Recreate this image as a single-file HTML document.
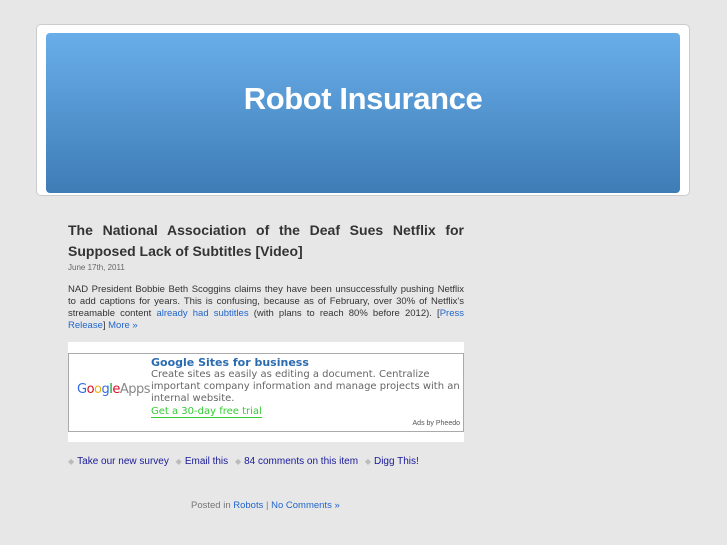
<!DOCTYPE html><html><head><style>
body{margin:0;background:#e7e7e7;font-family:"Liberation Sans",sans-serif;width:727px;height:545px;overflow:hidden;position:relative}
.card{position:absolute;left:36px;top:24px;width:654px;height:172px;background:#fff;border:1px solid #ccc;border-radius:5px;box-sizing:border-box}
.hd{position:absolute;left:46px;top:33px;width:634px;height:160px;border-radius:4px;background:linear-gradient(#69aee9,#3e7cb6)}
.hd h1{margin:0;position:absolute;top:48px;width:100%;text-align:center;color:#fff;font-size:31px;font-weight:bold;letter-spacing:-0.4px}
.t{position:absolute;left:68px;top:220px;width:396px;font-size:14px;font-weight:bold;color:#333;line-height:21px;text-align:justify;text-align-last:justify}
.t2{text-align-last:left}
.d{position:absolute;left:68px;top:263px;font-size:8px;color:#666}
.b{position:absolute;left:68px;top:284px;width:396px;font-size:9.5px;color:#333;line-height:12px;text-align:justify}
a{color:#2266cc;text-decoration:none}
.ad{position:absolute;left:68px;top:342px;width:396px;height:100px;background:#fff}
.in{position:absolute;left:0;top:11px;width:394px;height:77px;border:1px solid #aaa;font-family:"DejaVu Sans",sans-serif}
.foot{position:absolute;top:456px;left:68px;font-size:10px;color:#1a1a99}
.foot span{color:#bbb;font-size:8px;margin:0 3px 0 4px}
.foot span:first-child{margin-left:0}
</style></head><body>
<div class="card"></div>
<div class="hd"><h1>Robot Insurance</h1></div>
<div class="t">The National Association of the Deaf Sues Netflix for</div>
<div class="t t2" style="top:241px">Supposed Lack of Subtitles [Video]</div>
<div class="d">June 17th, 2011</div>
<div class="b">NAD President Bobbie Beth Scoggins claims they have been unsuccessfully pushing Netflix to add captions for years. This is confusing, because as of February, over 30% of Netflix's streamable content <a>already had subtitles</a> (with plans to reach 80% before 2012). [<a>Press Release</a>] <a>More »</a></div>
<div class="ad"><div class="in">
<div style="position:absolute;left:8px;top:28px;font-size:13px;letter-spacing:-0.5px"><span style="color:#3369e8">G</span><span style="color:#d50f25">o</span><span style="color:#eeb211">o</span><span style="color:#3369e8">g</span><span style="color:#009925">l</span><span style="color:#d50f25">e</span><span style="color:#888">Apps</span></div>
<div style="position:absolute;left:82px;top:2px;font-size:11px;font-weight:bold;color:#2a6bb0">Google Sites for business</div>
<div style="position:absolute;left:82px;top:15px;width:318px;font-size:10px;line-height:12px;color:#666">Create sites as easily as editing a document. Centralize important company information and manage projects with an internal website.</div>
<div style="position:absolute;left:82px;top:52px;font-size:10px;color:#3c3;border-bottom:1px solid #3c3">Get a 30-day free trial</div>
<div style="position:absolute;right:3px;top:66px;font-size:7px;color:#555;font-family:'Liberation Sans',sans-serif">Ads by Pheedo</div>
</div></div>
<div class="foot"><span>◆</span>Take our new survey <span>◆</span>Email this <span>◆</span>84 comments on this item <span>◆</span>Digg This!</div>
<div style="position:absolute;top:500px;left:191px;font-size:9.5px;color:#777">Posted in <a>Robots</a> | <a>No Comments »</a></div>
</body></html>
